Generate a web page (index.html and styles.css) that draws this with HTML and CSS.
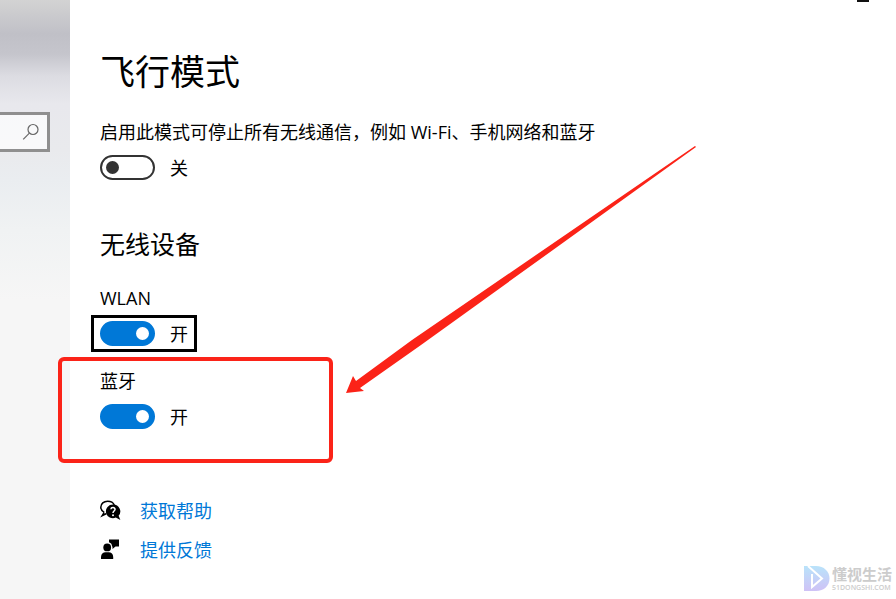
FILE: index.html
```html
<!DOCTYPE html>
<html lang="zh-CN">
<head>
    <meta charset="UTF-8">
    <meta name="viewport" content="width=device-width, initial-scale=1.0">
    <title>飞行模式</title>
    <link rel="stylesheet" href="styles.css">
</head>
<body>
    <div class="window">
        <aside class="sidebar">
            <form class="search">
                <input type="search" aria-label="搜索">
                <button type="submit" aria-label="搜索">
                    <svg width="18" height="18" viewBox="0 0 18 18" fill="none" stroke="#666" stroke-width="1.2">
                        <circle cx="12" cy="6.5" r="5"/>
                        <path d="M8.4 10.2L2.2 16.4"/>
                    </svg>
                </button>
            </form>
        </aside>

        <main>
            <button class="minimize" type="button" aria-label="最小化"></button>

            <h1>飞行模式</h1>
            <div class="setting">
                <label for="airplane">启用此模式可停止所有无线通信，例如 Wi-Fi、手机网络和蓝牙</label>
                <div class="control">
                    <input class="toggle" type="checkbox" id="airplane">
                    <span>关</span>
                </div>
            </div>

            <h2>无线设备</h2>
            <div class="setting">
                <label for="wlan">WLAN</label>
                <div class="control focused">
                    <input class="toggle" type="checkbox" id="wlan" checked>
                    <span>开</span>
                </div>
            </div>
            <div class="setting marked">
                <label for="bluetooth">蓝牙</label>
                <div class="control">
                    <input class="toggle" type="checkbox" id="bluetooth" checked>
                    <span>开</span>
                </div>
            </div>

            <nav class="links">
                <a href="#help">
                    <svg width="22" height="22" viewBox="0 0 22 22">
                        <path d="M4.2 12.4C2 11 .8 9.4 .8 7.3C.8 3.7 3.8 1.2 7.6 1.2C11 1.2 13.4 2.8 14.3 5M4.2 12.4L2.2 15.6L6.6 13.5" fill="none" stroke="#000" stroke-width="1.5"/>
                        <path d="M13 4.6A7 6.8 0 1 0 15.8 17.6L20.4 20L18.6 15.8A7 6.8 0 0 0 13 4.6Z"/>
                        <path d="M10.9 9.3C11.1 6.9 15.2 7 15 9.5C14.9 11.1 13 11.1 13 13" fill="none" stroke="#fff" stroke-width="1.5"/>
                        <circle cx="13" cy="15.2" r="1" fill="#fff"/>
                    </svg>
                    <span>获取帮助</span>
                </a>
                <a href="#feedback">
                    <svg width="22" height="22" viewBox="0 0 22 22">
                        <circle cx="7.2" cy="8.4" r="3.9"/>
                        <path d="M1 20V18C1 15 3 13.2 5.6 13.2H8.6C11.3 13.2 13.2 15 13.2 18V20Z"/>
                        <path d="M9 .5H19V7.5H15.5L12.5 10V7.500H12C12 5.5 11 4 9 3.3Z"/>
                    </svg>
                    <span>提供反馈</span>
                </a>
            </nav>
        </main>

        <svg class="arrow" width="350" height="248" viewBox="0 0 350 248">
            <path d="M0 247L7 230L10 235L66 194L349 0L350 1L75 199L14 242L18 245Z" fill="#fb2318"/>
        </svg>

        <div class="watermark">
            <svg width="26" height="28" viewBox="0 0 26 28">
                <defs>
                    <linearGradient id="logo" x1="0" y1="0" x2="0" y2="1">
                        <stop offset="0" stop-color="#b9e3fa"/>
                        <stop offset="1" stop-color="#cfc2f6"/>
                    </linearGradient>
                </defs>
                <path d="M0 1H12C20 1 25.5 6.5 25.5 13.5S20 26 12 26H0Z" fill="url(#logo)"/>
                <path d="M4 1L18 13.5L8 22V9" fill="none" stroke="#fff" stroke-width="2"/>
            </svg>
            <div>
                <strong>懂视生活</strong>
                <small>51DONGSHI.COM</small>
            </div>
        </div>
    </div>
</body>
</html>
```

FILE: styles.css
```css
* {
    box-sizing: border-box;
}
body {
    margin: 0;
    font-family: "Open Sans", "Noto Sans CJK SC", sans-serif;
    font-size: 18px;
    line-height: 24px;
    color: #000;
    background-color: #fff;
}
.window {
    position: relative;
    display: flex;
    min-height: 100vh;
    overflow: hidden;
}

/* sidebar */
.sidebar {
    width: 70px;
    padding-top: 112px;
    background: linear-gradient(#d3d3d3 0, #c0c0c7 34px, #c5c5cc 54px, #dcdce2 76px, #e8e8ed 104px, #e9eaed 150px, #eaedf0 180px, #f0f2f3 230px, #f6f6f6 300px);
}
.search {
    display: flex;
    width: 50px;
    height: 40px;
    border: 3px solid #8f8f8f;
    border-left: none;
    background-color: rgba(255, 255, 255, 0.7);
}
.search input {
    flex: 1;
    min-width: 0;
    padding: 0;
    border: none;
    outline: none;
    background: none;
}
.search button {
    display: flex;
    align-items: center;
    padding: 0 8px 0 0;
    border: none;
    background: none;
}

/* content */
main {
    flex: 1;
    padding: 48px 30px 37px;
}
h1, h2 {
    margin: 0;
    font-weight: 400;
}
h1 {
    margin-bottom: 24px;
    font-size: 35px;
    line-height: 48px;
}
h2 {
    margin: 48px 0 26px;
    font-size: 25px;
    line-height: 32px;
}
.setting {
    position: relative;
}
.setting label {
    display: block;
    margin-bottom: 11px;
}
.setting + .setting {
    margin-top: 23px;
}
.control {
    position: relative;
    display: flex;
    align-items: center;
    gap: 15px;
    width: fit-content;
    height: 25px;
}
.focused::after {
    content: "";
    position: absolute;
    inset: -6px -9px;
    border: 3px solid #000;
    pointer-events: none;
}
.toggle {
    appearance: none;
    display: flex;
    align-items: center;
    width: 55px;
    height: 25px;
    margin: 0;
    padding: 0 4px;
    border: 2px solid #333;
    border-radius: 13px;
}
.toggle::before {
    content: "";
    width: 13px;
    height: 13px;
    border-radius: 50%;
    background-color: #333;
}
.toggle:checked {
    justify-content: flex-end;
    border-color: #0078d7;
    background-color: #0078d7;
}
.toggle:checked::before {
    background-color: #fff;
}
.links {
    display: flex;
    flex-direction: column;
    align-items: flex-start;
    gap: 15px;
    margin-top: 70px;
}
.links a {
    display: flex;
    align-items: center;
    gap: 18px;
    color: #0078d7;
    text-decoration: none;
}

.minimize {
    position: absolute;
    top: 0;
    right: 27px;
    width: 12px;
    height: 2px;
    padding: 0;
    border: none;
    background-color: #111;
}

/* annotations */
.marked::after {
    content: "";
    box-sizing: border-box;
    position: absolute;
    top: -12px;
    left: -42px;
    width: 275px;
    height: 106px;
    border: 4px solid #fb2318;
    border-radius: 6px;
    pointer-events: none;
}
.arrow {
    position: absolute;
    top: 146px;
    left: 346px;
    pointer-events: none;
}
.watermark {
    position: absolute;
    right: 4px;
    bottom: 6px;
    display: flex;
    align-items: center;
    gap: 2px;
    color: #ccc;
}
.watermark strong,
.watermark small {
    display: block;
}
.watermark strong {
    font-size: 15px;
    line-height: 18px;
}
.watermark small {
    font-size: 7px;
    font-weight: 600;
    line-height: 10px;
}
```
